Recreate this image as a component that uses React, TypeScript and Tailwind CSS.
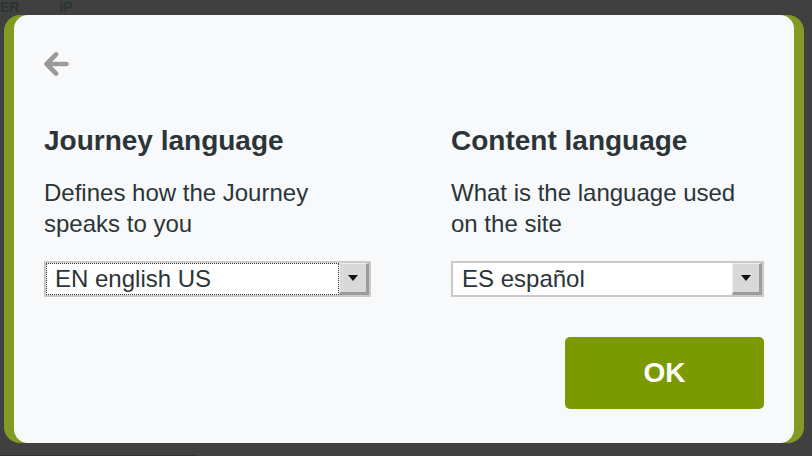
import { ReactNode } from "react";

const font = { fontFamily: '"Liberation Sans", Arial, sans-serif' };

function FakeSelect({
  value,
  width,
  focused,
}: {
  value: string;
  width: string;
  focused?: boolean;
}) {
  return (
    <div
      className={`flex h-[36px] ${width} border-2 border-[#cacaca] bg-white`}
    >
      <div
        className={`flex flex-1 items-center pl-[8px] text-[24px] leading-none text-[#2b3538] ${
          focused ? "border border-dotted border-[#333]" : "border border-transparent"
        }`}
      >
        {value}
      </div>
      <div className="flex w-[30px] items-center justify-center border-t border-l border-t-[#eeeeee] border-l-[#eeeeee] border-r-[3px] border-b-[3px] border-r-[#9c9c9c] border-b-[#9c9c9c] bg-[#d9d9d9]">
        <svg width="10" height="6" viewBox="0 0 10 6">
          <path d="M0 0 H10 L5 6 Z" fill="#111" />
        </svg>
      </div>
    </div>
  );
}

function Column({
  title,
  children,
  select,
  width,
}: {
  title: string;
  children: ReactNode;
  select: ReactNode;
  width: string;
}) {
  return (
    <div className={`flex flex-col ${width}`}>
      <h2 className="text-[28px] font-bold leading-[32px] text-[#2b3538]">
        {title}
      </h2>
      <p className="mt-[20px] text-[24px] leading-[31px] text-[#2b3538]">
        {children}
      </p>
      <div className="mt-[22px]">{select}</div>
    </div>
  );
}

export default function App() {
  return (
    <div className="h-[456px] w-[812px] overflow-hidden bg-[#404040]" style={font}>
      {/* page behind the overlay, barely visible */}
      <div className="flex h-[15px] items-start gap-[40px] text-[14px] font-bold leading-[14px] text-[#2a3431]">
        <span>ER</span>
        <span>iP</span>
      </div>
      <div className="ml-[4px] h-[428px] w-[800px] rounded-[16px] bg-[#819b24] px-[10px]">
        <div className="flex h-full flex-col rounded-[14px] bg-[#f8f9fb] pl-[30px] pr-[30px] pt-[37px]">
          <svg width="25" height="24" viewBox="0 0 25 24" fill="none">
            <path
              d="M22.5 12 H3 M12 2.5 L2.5 12 L12 21.5"
              stroke="#9a9a9a"
              strokeWidth="4.6"
              strokeLinecap="round"
              strokeLinejoin="round"
            />
          </svg>
          <div className="mt-[49px] flex gap-[80px]">
            <Column
              title="Journey language"
              width="w-[327px]"
              select={<FakeSelect value="EN english US" width="w-[327px]" focused />}
            >
              Defines how the Journey
              <br />
              speaks to you
            </Column>
            <Column
              title="Content language"
              width="w-[313px]"
              select={<FakeSelect value="ES español" width="w-[313px]" />}
            >
              What is the language used
              <br />
              on the site
            </Column>
          </div>
          <div className="mt-[40px] flex justify-end">
            <button className="h-[72px] w-[199px] rounded-[5px] bg-[#7b9900] text-[28px] font-bold text-white">
              OK
            </button>
          </div>
        </div>
      </div>
      <div className="mt-[12px] h-[1px] w-[197px] bg-[#2d3334]" />
    </div>
  );
}
